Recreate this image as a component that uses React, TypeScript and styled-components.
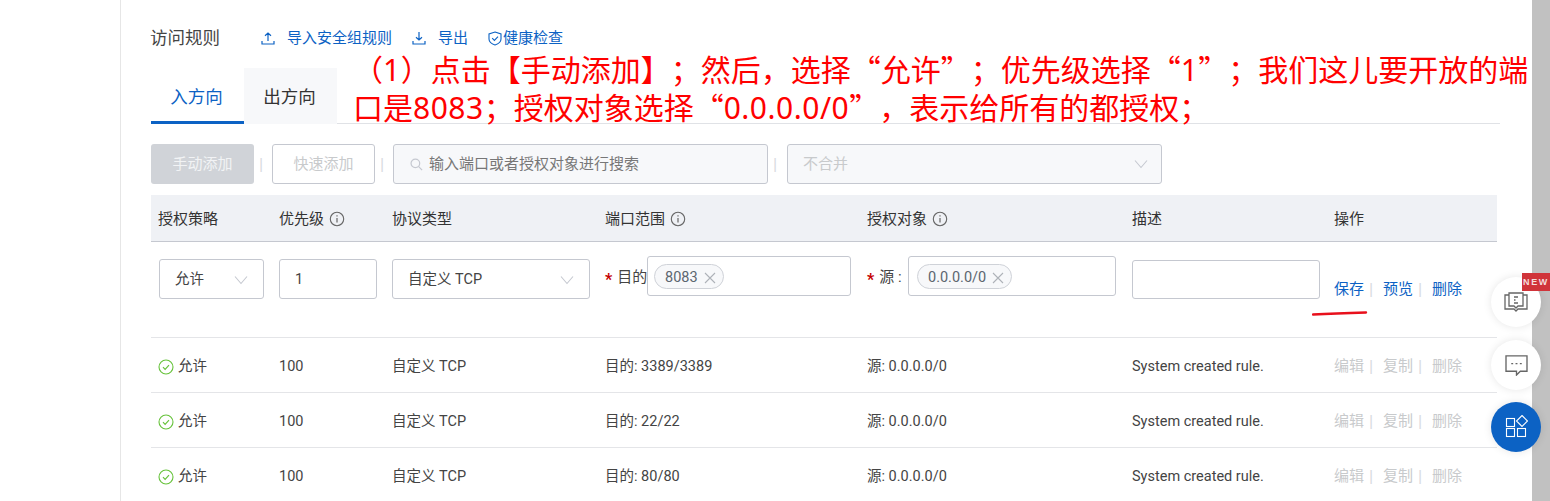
import React from 'react'
import styled, { createGlobalStyle } from 'styled-components'

const GlobalStyle = createGlobalStyle`
  html, body {
    margin: 0;
    padding: 0;
    height: 501px;
    overflow: hidden;
    background: #fff;
  }
  body {
    font-family: Roboto, "Noto Sans CJK SC", sans-serif;
    font-size: 15px;
    line-height: 20px;
    color: #333;
  }
`

const Page = styled.div`
  position: relative;
  display: flex;
  width: 1550px;
  height: 501px;
  overflow: hidden;
`

const SideGutter = styled.div`
  width: 120px;
  flex: none;
  border-right: 1px solid #e6e6e6;
`

const Main = styled.main`
  flex: 1;
  padding: 0 32px 0 30px;
  min-width: 0;
`

const ScrollBar = styled.div`
  width: 18px;
  flex: none;
  background: #c1c1c1;
`

const TitleRow = styled.div`
  display: flex;
  align-items: center;
  height: 20px;
  padding-top: 28px;
`

const Title = styled.h3`
  margin: 0 40px 0 -1px;
  padding-right: 1px;
  font-size: 17.5px;
  font-weight: 400;
  color: #444;
  line-height: 20px;
`

const TitleLink = styled.a<{ $gap?: number; $after?: number }>`
  display: flex;
  align-items: center;
  gap: ${({ $gap }) => $gap ?? 12}px;
  margin-right: ${({ $after }) => $after ?? 20}px;
  color: #0c62c4;
  line-height: 20px;
`

const Tabs = styled.div`
  display: flex;
  height: 55px;
  margin-top: 20px;
  border-bottom: 1px solid #e0e2e6;
`

const Tab = styled.div<{ $active?: boolean }>`
  box-sizing: border-box;
  width: 93px;
  height: 56px;
  padding-right: 2px;
  font-size: 17.5px;
  line-height: 59px;
  text-align: center;
  color: ${({ $active }) => ($active ? '#0c62c4' : '#333')};
  background: ${({ $active }) => ($active ? '#fff' : '#f7f8fa')};
  border-bottom: ${({ $active }) => ($active ? '3px solid #0c62c4' : 'none')};
`

const Toolbar = styled.div`
  display: flex;
  align-items: center;
  height: 40px;
  margin-top: 20px;
`

const PrimaryDisabled = styled.div`
  box-sizing: border-box;
  width: 103px;
  height: 40px;
  border-radius: 3px;
  background: #d0d3d8;
  color: #f2f3f5;
  text-align: center;
  line-height: 40px;
`

const SecondaryDisabled = styled.div`
  box-sizing: border-box;
  width: 103px;
  height: 40px;
  border: 1px solid #c5c8d0;
  border-radius: 3px;
  color: #c8cacc;
  text-align: center;
  line-height: 38px;
`

const Pipe = styled.span`
  box-sizing: border-box;
  width: 18px;
  padding-left: 5px;
  font-size: 17px;
  color: #d9dbdf;
`

const SearchBox = styled.div`
  box-sizing: border-box;
  display: flex;
  align-items: center;
  gap: 6px;
  width: 375px;
  height: 40px;
  padding-left: 16px;
  border: 1px solid #c5c8d0;
  border-radius: 3px;
  background: #f7f8fa;
  color: #777;
`

const MergeSelect = styled.div`
  box-sizing: border-box;
  display: flex;
  align-items: center;
  justify-content: space-between;
  width: 375px;
  height: 40px;
  margin-left: 1px;
  padding: 0 13px 0 15px;
  border: 1px solid #c5c8d0;
  border-radius: 3px;
  background: #f7f8fa;
  color: #c8cacc;
`

const tableColumns = '121px 113px 213px 262px 265px 202px 170px'

const HeaderRow = styled.div`
  display: grid;
  grid-template-columns: ${tableColumns};
  align-items: center;
  box-sizing: border-box;
  width: 1346px;
  height: 47px;
  margin-top: 11px;
  padding-top: 2px;
  background: #eff1f5;
  border-bottom: 1px solid #c5c8d0;
`

const HeaderCell = styled.div`
  display: flex;
  align-items: center;
  gap: 5px;
  padding-left: 7px;
  color: #333;
`

const InfoIcon = styled.svg`
  display: block;
  width: 16px;
  height: 16px;
  fill: none;
  stroke: #666;
`

const EditRow = styled.div`
  display: grid;
  grid-template-columns: ${tableColumns};
  box-sizing: border-box;
  width: 1346px;
  height: 96px;
  border-bottom: 1px solid #e4e5e8;
`

const EditCell = styled.div<{ $top: number; $left?: number }>`
  display: flex;
  align-items: center;
  padding-top: ${({ $top }) => $top}px;
  padding-left: ${({ $left }) => $left ?? 7}px;
  height: 40px;
`

const Field = styled.div<{ $width: number; $height?: number; $inset?: number }>`
  box-sizing: border-box;
  display: flex;
  align-items: center;
  justify-content: space-between;
  flex: none;
  width: ${({ $width }) => $width}px;
  height: ${({ $height }) => $height ?? 40}px;
  padding: 2px ${({ $inset }) => $inset ?? 15}px 0;
  border: 1px solid #c5c8d0;
  border-radius: 3px;
  background: #fff;
  color: #444;
  font-size: 14.5px;
`

const TagField = styled(Field)`
  justify-content: flex-start;
  padding-top: 0;
`

const RequiredLabel = styled.span<{ $width: number }>`
  display: flex;
  align-items: center;
  flex: none;
  gap: 5px;
  width: ${({ $width }) => $width}px;
  padding-top: 2px;
  color: #444;
  white-space: nowrap;

  &::before {
    content: '*';
    color: #c40000;
    font-size: 16px;
    font-weight: 700;
    line-height: 14px;
    padding-top: 5px;
  }
`

const Tag = styled.span`
  box-sizing: border-box;
  display: flex;
  align-items: center;
  gap: 6px;
  height: 25px;
  padding: 3px 7px 0 10px;
  border: 1px solid #cfd2d8;
  border-radius: 13px;
  background: #f7f8fa;
  color: #5c6670;
`

const ActionCell = styled.div<{ $top: number }>`
  display: flex;
  align-items: center;
  padding-left: 7px;
  padding-top: ${({ $top }) => $top}px;
  height: 20px;
  white-space: nowrap;
`

const Action = styled.a<{ $muted?: boolean }>`
  color: ${({ $muted }) => ($muted ? '#c8cacc' : '#0c62c4')};
`

const ActionPipe = styled.span`
  box-sizing: border-box;
  width: 19px;
  padding-left: 5px;
  font-size: 17px;
  color: #d9dbdf;
`

const Row = styled.div`
  display: grid;
  grid-template-columns: ${tableColumns};
  align-items: center;
  box-sizing: border-box;
  width: 1346px;
  height: 55px;
  border-bottom: 1px solid #e4e5e8;
`

const Cell = styled.div`
  display: flex;
  align-items: center;
  gap: 4px;
  padding-left: 7px;
  padding-top: 3px;
  color: #444;
  font-size: 14.5px;
  white-space: nowrap;
`

const Annotation = styled.div`
  position: absolute;
  left: 353px;
  top: 49px;
  font-family: "Noto Sans CJK SC", sans-serif;
  font-size: 30px;
  line-height: 38px;
  color: #f00;
  text-spacing-trim: space-all;
  white-space: nowrap;
`

const AnnotationNumber = styled.span`
  font-family: "Noto Sans", sans-serif;
  letter-spacing: 0.5px;
  line-height: 1;
`

const Underline = styled.svg`
  position: absolute;
  left: 1312px;
  top: 309px;
  width: 56px;
  height: 8px;
`

const FloatButton = styled.div<{ $top: number; $blue?: boolean }>`
  position: absolute;
  left: 1491px;
  top: ${({ $top }) => $top}px;
  display: flex;
  align-items: center;
  justify-content: center;
  width: 50px;
  height: 50px;
  border-radius: 50%;
  background: ${({ $blue }) => ($blue ? '#0c62c4' : '#fff')};
  box-shadow: 0 0 8px rgba(0, 0, 0, 0.1);
`

const NewBadge = styled.span`
  position: absolute;
  left: 1522px;
  top: 273px;
  width: 28px;
  height: 18px;
  background: #d0343a;
  color: #f4dede;
  font-family: "Liberation Sans", sans-serif;
  font-size: 9px;
  font-weight: 700;
  letter-spacing: 1.6px;
  line-height: 18px;
  text-align: center;
`

const Info = () => (
  <InfoIcon viewBox="0 0 16 16">
    <circle cx="8" cy="8" r="6.7" strokeWidth="1.1" />
    <path d="M8 7v4.6M8 4.2v1.3" strokeWidth="1.2" />
  </InfoIcon>
)

const Chevron = ({ color = '#c5c8d0' }: { color?: string }) => (
  <svg width="14" height="10" viewBox="0 0 14 10" fill="none" stroke={color} strokeWidth="1.1">
    <path d="M1 1.5l6 7 6-7" />
  </svg>
)

const CloseX = () => (
  <svg width="12" height="12" viewBox="0 0 12 12" fill="none" stroke="#aeb2b8" strokeWidth="1.1">
    <path d="M1 1l10 10M11 1L1 11" />
  </svg>
)

const Allow = () => (
  <svg width="16" height="16" viewBox="0 0 16 16" fill="none" stroke="#66c23a">
    <circle cx="8" cy="8" r="7" strokeWidth="1.1" />
    <path d="M5 8.2l2.1 2.1L11 6.2" strokeWidth="1.2" />
  </svg>
)

const rules = [
  { port: '目的: 3389/3389' },
  { port: '目的: 22/22' },
  { port: '目的: 80/80' },
]

const RuleActions = () => (
  <ActionCell $top={1}>
    <Action $muted>编辑</Action>
    <ActionPipe>|</ActionPipe>
    <Action $muted>复制</Action>
    <ActionPipe>|</ActionPipe>
    <Action $muted>删除</Action>
  </ActionCell>
)

export default function App() {
  return (
    <Page lang="zh-CN">
      <GlobalStyle />
      <SideGutter />
      <Main>
        <TitleRow>
          <Title>访问规则</Title>
          <TitleLink $after={20}>
            <svg width="14" height="14" viewBox="0 0 14 14" fill="none" stroke="#0c62c4" strokeWidth="1.2">
              <path d="M7 10V2M4 4.8L7 2l3 2.8M1 10v3h12v-3" />
            </svg>
            导入安全组规则
          </TitleLink>
          <TitleLink $after={20}>
            <svg width="14" height="14" viewBox="0 0 14 14" fill="none" stroke="#0c62c4" strokeWidth="1.2">
              <path d="M7 1v8M4 6.2L7 9l3-2.8M1 10v3h12v-3" />
            </svg>
            导出
          </TitleLink>
          <TitleLink $gap={1} $after={0}>
            <svg width="14" height="15" viewBox="0 0 14 15" fill="none" stroke="#0c62c4" strokeWidth="1.1">
              <path d="M7 1l6 2v5c0 3-3 5-6 6-3-1-6-3-6-6V3z" />
              <path d="M4.2 7.2L6.4 9.4 10 5.6" />
            </svg>
            健康检查
          </TitleLink>
        </TitleRow>

        <Tabs>
          <Tab $active>入方向</Tab>
          <Tab>出方向</Tab>
        </Tabs>

        <Toolbar>
          <PrimaryDisabled>手动添加</PrimaryDisabled>
          <Pipe>|</Pipe>
          <SecondaryDisabled>快速添加</SecondaryDisabled>
          <Pipe>|</Pipe>
          <SearchBox>
            <svg width="13" height="13" viewBox="0 0 15 15" fill="none" stroke="#c5c8d0" strokeWidth="1.4">
              <circle cx="6.2" cy="6.2" r="5" />
              <path d="M10 10l4 4" />
            </svg>
            输入端口或者授权对象进行搜索
          </SearchBox>
          <Pipe>|</Pipe>
          <MergeSelect>
            不合并
            <Chevron />
          </MergeSelect>
        </Toolbar>

        <HeaderRow>
          <HeaderCell>授权策略</HeaderCell>
          <HeaderCell>优先级 <Info /></HeaderCell>
          <HeaderCell>协议类型</HeaderCell>
          <HeaderCell>端口范围 <Info /></HeaderCell>
          <HeaderCell>授权对象 <Info /></HeaderCell>
          <HeaderCell>描述</HeaderCell>
          <HeaderCell>操作</HeaderCell>
        </HeaderRow>

        <EditRow>
          <EditCell $top={17} $left={8}>
            <Field $width={105}>
              允许
              <Chevron />
            </Field>
          </EditCell>
          <EditCell $top={17}>
            <Field $width={98}>1</Field>
          </EditCell>
          <EditCell $top={17}>
            <Field $width={198}>
              自定义 TCP
              <Chevron />
            </Field>
          </EditCell>
          <EditCell $top={14}>
            <RequiredLabel $width={42}>目的</RequiredLabel>
            <TagField $width={204} $inset={6}>
              <Tag>
                8083
                <CloseX />
              </Tag>
            </TagField>
          </EditCell>
          <EditCell $top={14}>
            <RequiredLabel $width={41}>源 :</RequiredLabel>
            <TagField $width={208} $inset={8}>
              <Tag>
                0.0.0.0/0
                <CloseX />
              </Tag>
            </TagField>
          </EditCell>
          <EditCell $top={17}>
            <Field $width={188} $height={39} />
          </EditCell>
          <ActionCell $top={37}>
            <Action>保存</Action>
            <ActionPipe>|</ActionPipe>
            <Action>预览</Action>
            <ActionPipe>|</ActionPipe>
            <Action>删除</Action>
          </ActionCell>
        </EditRow>

        {rules.map((rule) => (
          <Row key={rule.port}>
            <Cell>
              <Allow />
              允许
            </Cell>
            <Cell>100</Cell>
            <Cell>自定义 TCP</Cell>
            <Cell>{rule.port}</Cell>
            <Cell>源: 0.0.0.0/0</Cell>
            <Cell>System created rule.</Cell>
            <RuleActions />
          </Row>
        ))}
      </Main>
      <ScrollBar />

      <Annotation>
        <div>（<AnnotationNumber>1</AnnotationNumber>）点击【手动添加】；然后，选择“允许”；优先级选择“<AnnotationNumber>1</AnnotationNumber>”；我们这儿要开放的端</div>
        <div>口是<AnnotationNumber>8083</AnnotationNumber>；授权对象选择“<AnnotationNumber>0.0.0.0/0</AnnotationNumber>”，表示给所有的都授权；</div>
      </Annotation>

      <Underline viewBox="0 0 56 8">
        <path d="M1 5.5C20 4.5 36 4 54 3.5" stroke="#e8101c" strokeWidth="2.4" fill="none" strokeLinecap="round" />
      </Underline>

      <FloatButton $top={277}>
        <svg width="24" height="20" viewBox="0 0 24 20" fill="none" stroke="#666" strokeWidth="1.3">
          <path d="M5 1h14v13h-5l-2 2-2-2H5zM5 3H1v14h9l2 2 2-2h9V3h-4" />
          <path d="M10 5h4M10 8h1.5M10 11h4" />
        </svg>
      </FloatButton>
      <NewBadge>NEW</NewBadge>
      <FloatButton $top={340}>
        <svg width="23" height="21" viewBox="0 0 24 22" fill="none" stroke="#666" strokeWidth="1.4">
          <path d="M1 1h22v16h-7l-4 4v-4H1z" />
          <path d="M6.5 9h2M11 9h2M15.5 9h2" />
        </svg>
      </FloatButton>
      <FloatButton $top={402} $blue>
        <svg width="24" height="24" viewBox="0 0 24 24" fill="none" stroke="#fff" strokeWidth="1.1">
          <rect x="2.5" y="3.5" width="8" height="8" />
          <rect x="2.5" y="13.5" width="8" height="8" />
          <rect x="13.5" y="13.5" width="8" height="8" />
          <path d="M18 0.5l5.5 5.5-5.5 5.5-5.5-5.5z" />
        </svg>
      </FloatButton>
    </Page>
  )
}
